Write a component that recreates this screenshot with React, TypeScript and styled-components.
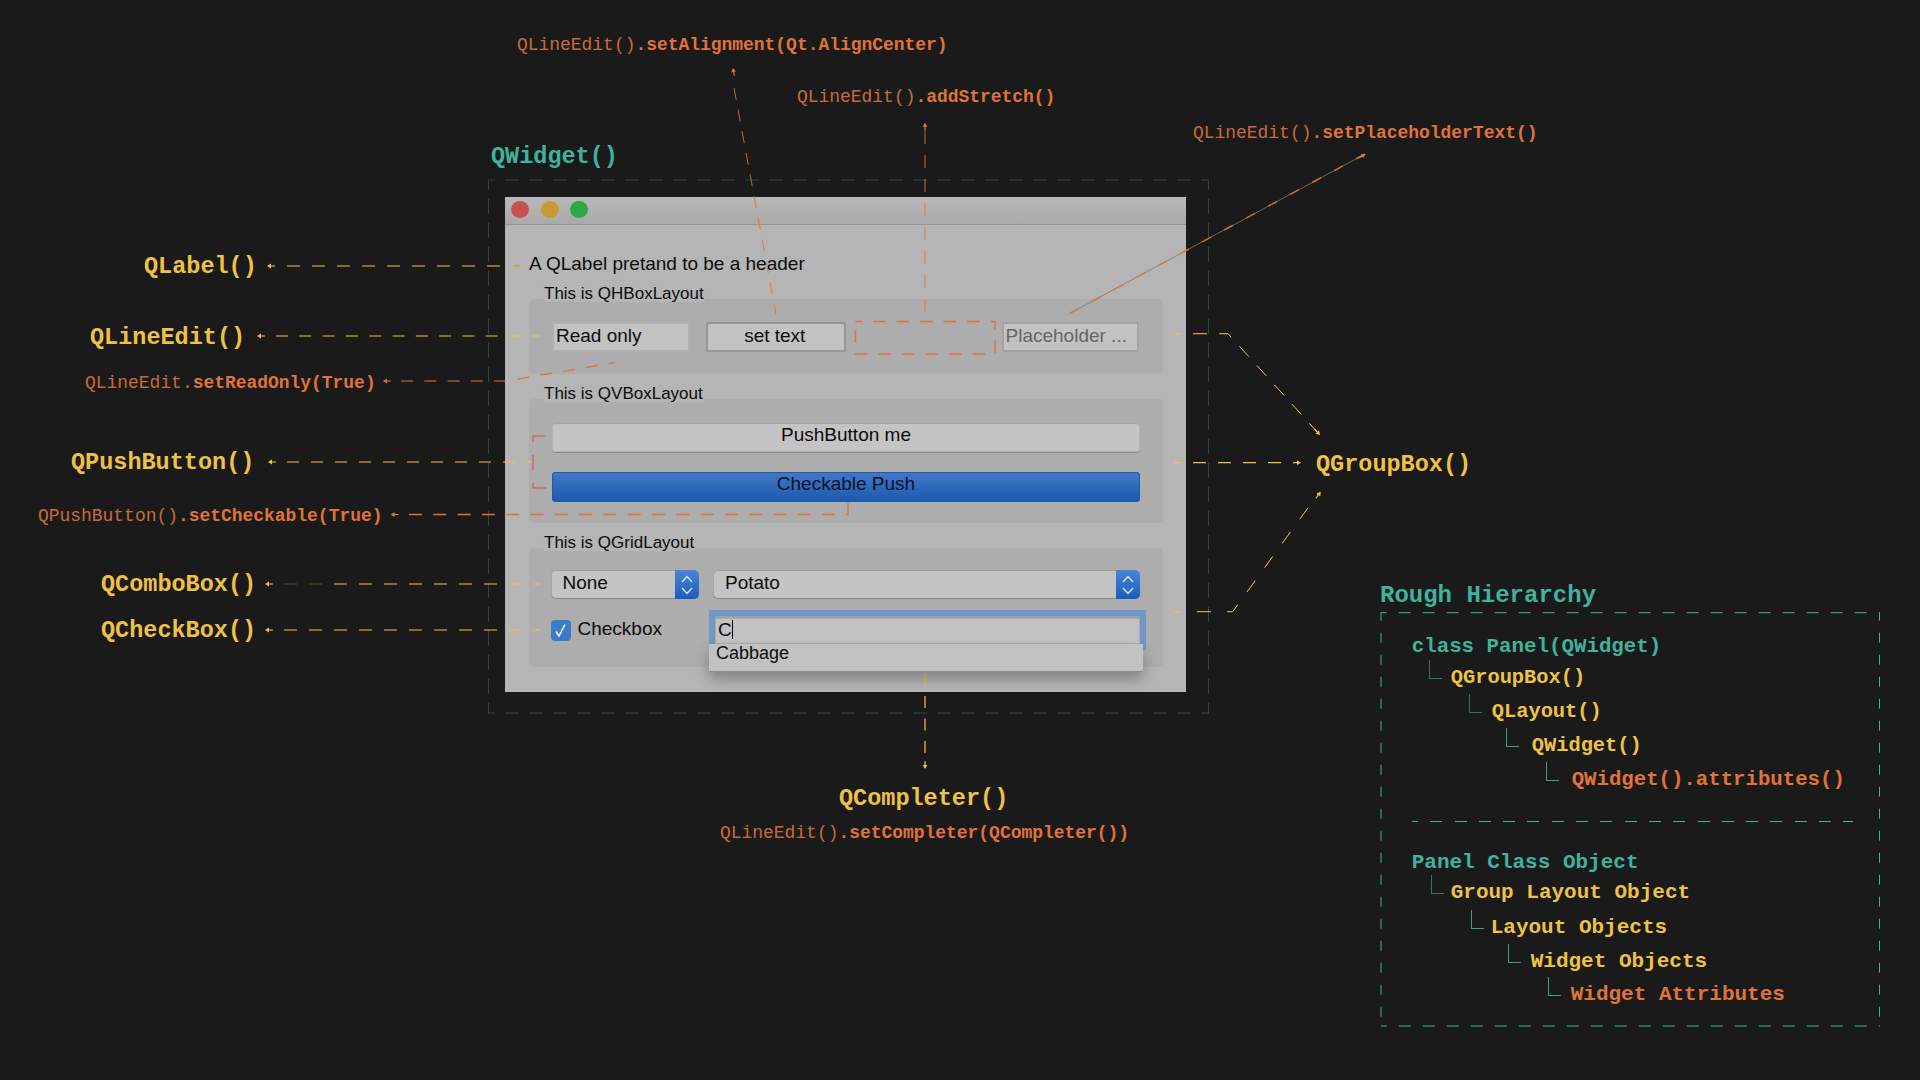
import React from "react";
import styled, { createGlobalStyle } from "styled-components";

const YELLOW = "#efc244";
const ORANGE = "#e0733a";
const TEAL = "#3fb39b";
const UI = `"Liberation Sans", Arial, sans-serif`;
const MONO = `"Liberation Mono", "Courier New", monospace`;

const Global = createGlobalStyle`
  html, body { margin: 0; padding: 0; background: #1a1a1a; }
`;

const Canvas = styled.div`
  position: relative;
  width: 1920px;
  height: 1080px;
  overflow: hidden;
  background: #1a1a1a;
  font-family: ${UI};
`;

/* ---------- the Qt window ---------- */
const Win = styled.div`
  position: absolute;
  left: 505px;
  top: 197px;
  width: 681px;
  height: 495px;
  background: #b5b5b5;
  color: #0c0c0c;
`;
const TitleBar = styled.div`
  display: flex;
  align-items: center;
  gap: 11.5px;
  box-sizing: border-box;
  height: 28px;
  padding: 0 0 2px 6px;
  background: linear-gradient(#b9b9b9, #a9a9a9);
  border-bottom: 1px solid #949494;
`;
const Light = styled.span<{ $c: string }>`
  width: 18px;
  height: 17px;
  border-radius: 50%;
  background: ${(p) => p.$c};
`;
const Body = styled.div`
  display: flex;
  flex-direction: column;
  padding: 28px 23px 0 24px;
`;
const Header = styled.div`
  height: 20px;
  line-height: 22px;
  font-size: 19px;
  margin-bottom: 1px;
`;
const Group = styled.section`
  display: flex;
  flex-direction: column;
  margin-top: 10px;
`;
const GroupTitle = styled.div`
  position: relative;
  z-index: 1;
  align-self: flex-start;
  height: 18px;
  line-height: 20px;
  margin: 0 0 -3px 15px;
  padding-right: 1px;
  background: #b5b5b5;
  font-size: 17px;
`;
const Panel = styled.div<{ $h: number; $top: number }>`
  display: flex;
  box-sizing: border-box;
  height: ${(p) => p.$h}px;
  padding: ${(p) => p.$top}px 23px 0 23px;
  background: #adadad;
  border-radius: 5px;
`;
const HRow = styled(Panel)`
  align-items: flex-start;
`;
const VCol = styled(Panel)`
  flex-direction: column;
  gap: 20px;
`;
const GridPanel = styled(Panel)`
  display: grid;
  grid-template-columns: 148px 1fr;
  grid-auto-rows: min-content;
  column-gap: 14.5px;
  row-gap: 17px;
  padding-left: 21.5px;
`;
const LineEdit = styled.div<{ $w: number; $ml?: number; $center?: boolean; $edge: string; $muted?: boolean }>`
  box-sizing: border-box;
  width: ${(p) => p.$w}px;
  height: 30px;
  margin-left: ${(p) => p.$ml ?? 0}px;
  padding: 0 ${(p) => (p.$center ? 4 : 2)}px 3px 2px;
  line-height: 24px;
  font-size: 19px;
  background: #c2c2c2;
  border: 2px solid ${(p) => p.$edge};
  text-align: ${(p) => (p.$center ? "center" : "left")};
  color: ${(p) => (p.$muted ? "#666666" : "#0c0c0c")};
  white-space: nowrap;
  overflow: hidden;
`;
const Slot = styled.div`
  width: 139px;
  height: 30px;
  margin-left: 10px;
`;
const PushButton = styled.button<{ $on?: boolean }>`
  flex: none;
  height: 29.5px;
  padding: 0 0 6px;
  border: 0;
  border-radius: 4px;
  font: 19px/23px ${UI};
  color: ${(p) => (p.$on ? "#06142c" : "#0c0c0c")};
  background: ${(p) => (p.$on ? "linear-gradient(#4479c6, #1a58ae)" : "#c4c4c4")};
  box-shadow: ${(p) =>
    p.$on ? "inset 0 0 0 1px #1f5cab" : "inset 0 1px 0 #a5a5a5, 0 1px 0 #8a8a8a, inset 0 0 0 1px #b4b4b4"};
`;
const Combo = styled.div`
  display: flex;
  height: 29px;
  border-radius: 5px;
  overflow: hidden;
  background: #c4c4c4;
  box-shadow: inset 0 1px 0 #a0a0a0, inset 0 -1px 0 #8a8a8a, inset 1px 0 0 #a8a8a8;
`;
const ComboText = styled.div`
  flex: 1;
  padding-left: 12px;
  font-size: 19px;
  line-height: 25px;
`;
const ComboArrow = styled.div`
  display: flex;
  align-items: center;
  justify-content: center;
  width: 24px;
  background: linear-gradient(#4a86d8, #1a5cbc);
`;
const CheckCell = styled.div`
  display: flex;
  align-items: flex-start;
  gap: 7px;
  padding-top: 4px;
  font-size: 19px;
  line-height: 17px;
`;
const CheckBox = styled.span`
  display: flex;
  align-items: center;
  justify-content: center;
  flex: none;
  width: 20px;
  height: 21px;
  border-radius: 4px;
  background: #3b7cc9;
`;
const CheckText = styled.span`
  margin-top: 0;
`;
const FocusEdit = styled.div`
  position: relative;
  box-sizing: border-box;
  height: 28px;
  margin-left: 2px;
  padding: 1px 0 0 3px;
  background: #c2c2c2;
  border-top: 2px solid #a2a2a2;
  box-shadow: 0 0 0 6px #7098c6, inset 0 0 0 1px #ababab;
  font-size: 19px;
  line-height: 22px;
  display: flex;
  align-items: flex-start;
`;
const Caret = styled.span`
  width: 1px;
  height: 19px;
  margin: 1px 0 0 0;
  background: #000;
`;
const Popup = styled.div`
  position: absolute;
  z-index: 2;
  left: -6px;
  right: -3px;
  top: 26px;
  height: 27px;
  padding-left: 7px;
  background: #c2c2c2;
  font-size: 18px;
  line-height: 18px;
  box-shadow: 0 1px 0 #8e8e8e, 0 8px 14px rgba(0, 0, 0, 0.28);
`;

/* ---------- free canvas labels ---------- */
const Note = styled.div<{ $x: number; $y: number; $size: number; $c: string; $bold?: boolean }>`
  position: absolute;
  left: ${(p) => p.$x}px;
  top: ${(p) => p.$y - 15}px;
  height: 30px;
  line-height: 30px;
  white-space: pre;
  font-family: ${MONO};
  font-size: ${(p) => p.$size}px;
  font-weight: ${(p) => (p.$bold ? 700 : 400)};
  color: ${(p) => p.$c};
`;
const Faint = styled.span`
  font-weight: 400;
  color: #c96a3a;
`;
const Strong = styled.span`
  font-weight: 700;
  color: ${ORANGE};
`;

/* ---------- hierarchy panel ---------- */
const Tree = styled.div`
  position: absolute;
  left: 1380.7px;
  top: 612.7px;
  box-sizing: border-box;
  width: 499px;
  height: 414px;
  padding: 22px 0 0 31px;
  font-family: ${MONO};
  font-weight: 700;
`;
const TreeRow = styled.div<{ $indent: number; $gap: number; $c: string; $size?: number }>`
  position: relative;
  height: 24px;
  line-height: 24px;
  margin-top: ${(p) => p.$gap}px;
  padding-left: ${(p) => p.$indent}px;
  font-size: ${(p) => p.$size ?? 21}px;
  color: ${(p) => p.$c};
  white-space: pre;
`;
const Elbow = styled.i<{ $left: number; $c: string }>`
  position: absolute;
  left: ${(p) => p.$left}px;
  bottom: 11px;
  width: 12px;
  height: 18px;
  border-left: 1px solid ${(p) => p.$c};
  border-bottom: 1px solid ${(p) => p.$c};
`;
const TreeDivider = styled.div`
  width: 441px;
  height: 1px;
  margin-top: 29px;
  background: repeating-linear-gradient(90deg, ${TEAL} 0 12px, transparent 12px 24.3px);
  background-position: -6px 0;
`;

const Overlay = styled.svg`
  position: absolute;
  left: 0;
  top: 0;
  pointer-events: none;
`;

type Line = { d: string; c: string; dash?: string; off?: number; w?: number; o?: number };
const lines: Line[] = [
  { d: "M287 266H505", c: YELLOW, dash: "13 12" },
  { d: "M513 266H520", c: "#bfa24e", w: 1.6 },
  { d: "M276 336H540", c: YELLOW, dash: "12 11.3" },
  { d: "M287 462H533", c: YELLOW, dash: "12 12" },
  { d: "M284 584H334", c: YELLOW, dash: "13 12", o: 0.3 },
  { d: "M334 584H541", c: YELLOW, dash: "13 12" },
  { d: "M284 630H541", c: YELLOW, dash: "13 12" },
  { d: "M1174 333.7H1228L1320 435", c: YELLOW, dash: "14 12", off: 7, w: 1 },
  { d: "M1174 462.7H1282", c: YELLOW, dash: "13 12", off: 6 },
  { d: "M1174 611.7H1232.7L1318 494", c: YELLOW, dash: "14 16", off: 7, w: 1 },
  { d: "M925 656V755", c: YELLOW, dash: "12 10.5", off: 5 },
  { d: "M401 381H506L614.5 362.7", c: ORANGE, dash: "12 11.3" },
  { d: "M409 514.5H848V497", c: ORANGE, dash: "13 11.3", w: 1.5 },
  { d: "M734 88L776 314", c: ORANGE, dash: "12 10", w: 1, o: 0.85 },
  { d: "M925 131V322", c: ORANGE, dash: "13 11", w: 1, o: 0.85 },
  { d: "M1365 154L1068.5 314", c: "#8a7a50", w: 0.8 },
  { d: "M1365 154L1068.5 314", c: ORANGE, dash: "10 15", w: 1.5, o: 0.85 },
  { d: "M546 436H533V442M533 455V470M533 483V488H546", c: "#d8544e" },
];
const arrows: [number, number, number, number, string][] = [
  [267, 266, -1, 0, YELLOW],
  [257, 336, -1, 0, YELLOW],
  [268, 462, -1, 0, YELLOW],
  [265, 584, -1, 0, YELLOW],
  [265, 630, -1, 0, YELLOW],
  [383, 381, -1, 0, ORANGE],
  [390.7, 514.5, -1, 0, ORANGE],
  [1301, 462.7, 1, 0, YELLOW],
  [1320, 435, 92, 101, YELLOW],
  [1320.7, 491.7, 85, -120, YELLOW],
  [925, 769, 0, 1, YELLOW],
  [733, 68, -1, -6, ORANGE],
  [925, 122.7, 0, -1, ORANGE],
  [1365.5, 154.3, 296, -160, ORANGE],
];

const Connectors = () => (
  <Overlay width={1920} height={1080} viewBox="0 0 1920 1080" fill="none">
    {/* QWidget frame */}
    <path d="M488 180H1209M488 713H1209" stroke="#2c4a42" strokeDasharray="14 10" strokeDashoffset={7} />
    <path d="M488.5 180V713M1208.5 180V713" stroke="#2c4a42" strokeDasharray="15 9" strokeDashoffset={5} />
    {/* hierarchy frame */}
    <path d="M1380.7 612.7H1880M1380.7 1026H1880" stroke={TEAL} strokeDasharray="12 12" strokeDashoffset={6} />
    <path d="M1381 612.7V1026M1879.5 612.7V1026" stroke={TEAL} strokeDasharray="10 12" strokeDashoffset={2} />
    {/* stretch placeholder */}
    <rect x="855.5" y="321.5" width="139.5" height="32.5" stroke={ORANGE} strokeWidth="1.4" strokeDasharray="12.5 11" strokeDashoffset={6} />
    {lines.map((l, i) => (
      <path
        key={i}
        d={l.d}
        stroke={l.c}
        strokeWidth={l.w ?? 1.2}
        strokeDasharray={l.dash}
        strokeDashoffset={l.off}
        opacity={l.o}
      />
    ))}
    {arrows.map(([x, y, dx, dy, c], i) => (
      <path
        key={i}
        transform={`translate(${x} ${y}) rotate(${(Math.atan2(dy, dx) * 180) / Math.PI + 180})`}
        d="M0 0L4 -2.4V-0.6H8V0.6H4V2.4Z"
        fill={c}
      />
    ))}
  </Overlay>
);

const Chevrons = () => (
  <svg width="12" height="22" viewBox="0 0 12 22" fill="none" stroke="#dce6f4" strokeWidth="1.4">
    <path d="M1 8L6 2.5L11 8M1 14L6 19.5L11 14" />
  </svg>
);

type NoteProps = { x: number; y: number; faint: string; strong: string };
const Sub = ({ x, y, faint, strong }: NoteProps) => (
  <Note $x={x} $y={y} $size={17.95} $c={ORANGE}>
    <Faint>{faint}</Faint>
    <Strong>{strong}</Strong>
  </Note>
);

const Big = ({ x, y, children }: { x: number; y: number; children: string }) => (
  <Note $x={x} $y={y + 1.5} $size={23.5} $c={YELLOW} $bold>
    {children}
  </Note>
);

const DIM = "#3a6f62";
const BRIGHT = "#3a9f8b";

export default function App() {
  return (
    <Canvas>
      <Global />
      <Win>
        <TitleBar>
          <Light $c="#c85050" />
          <Light $c="#c79a35" />
          <Light $c="#2ea846" />
        </TitleBar>
        <Body>
          <Header>A QLabel pretand to be a header</Header>
          <Group>
            <GroupTitle>This is QHBoxLayout</GroupTitle>
            <HRow $h={75} $top={23}>
              <LineEdit $w={138} $edge="#b0b0b0">Read only</LineEdit>
              <LineEdit $w={139.5} $ml={16} $center $edge="#969696">set text</LineEdit>
              <Slot />
              <LineEdit $w={137} $ml={7} $edge="#a3a3a3" $muted>Placeholder ...</LineEdit>
            </HRow>
          </Group>
          <Group>
            <GroupTitle>This is QVBoxLayout</GroupTitle>
            <VCol $h={124} $top={23.7}>
              <PushButton>PushButton me</PushButton>
              <PushButton $on>Checkable Push</PushButton>
            </VCol>
          </Group>
          <Group>
            <GroupTitle>This is QGridLayout</GroupTitle>
            <GridPanel $h={119} $top={22}>
              <Combo>
                <ComboText>None</ComboText>
                <ComboArrow><Chevrons /></ComboArrow>
              </Combo>
              <Combo>
                <ComboText>Potato</ComboText>
                <ComboArrow><Chevrons /></ComboArrow>
              </Combo>
              <CheckCell>
                <CheckBox>
                  <svg width="13" height="15" viewBox="0 0 13 15" fill="none" stroke="#f2f6fb" strokeWidth="1.6">
                    <path d="M2 8.5L5 13L11 1.5" />
                  </svg>
                </CheckBox>
                <CheckText>Checkbox</CheckText>
              </CheckCell>
              <FocusEdit>
                C<Caret />
                <Popup>Cabbage</Popup>
              </FocusEdit>
            </GridPanel>
          </Group>
        </Body>
      </Win>

      <Note $x={491} $y={157} $size={23.5} $c={TEAL} $bold>QWidget()</Note>
      <Big x={144} y={265}>QLabel()</Big>
      <Big x={90} y={336}>QLineEdit()</Big>
      <Big x={71} y={461}>QPushButton()</Big>
      <Big x={101} y={583}>QComboBox()</Big>
      <Big x={101} y={629}>QCheckBox()</Big>
      <Big x={1316} y={463}>QGroupBox()</Big>
      <Big x={839} y={797}>QCompleter()</Big>
      <Sub x={85} y={383} faint="QLineEdit." strong="setReadOnly(True)" />
      <Sub x={38} y={516} faint="QPushButton()" strong=".setCheckable(True)" />
      <Sub x={517} y={45} faint="QLineEdit()" strong=".setAlignment(Qt.AlignCenter)" />
      <Sub x={797} y={97} faint="QLineEdit()" strong=".addStretch()" />
      <Sub x={1193} y={133} faint="QLineEdit()" strong=".setPlaceholderText()" />
      <Sub x={720} y={833} faint="QLineEdit()" strong=".setCompleter(QCompleter())" />

      <Note $x={1380} $y={596} $size={24} $c={TEAL} $bold>Rough Hierarchy</Note>
      <Tree>
        <TreeRow $indent={0} $gap={0} $c={TEAL} $size={20.8}>class Panel(QWidget)</TreeRow>
        <TreeRow $indent={39} $gap={7} $c={YELLOW} $size={20.4}>
          <Elbow $left={17} $c={DIM} />QGroupBox()
        </TreeRow>
        <TreeRow $indent={80} $gap={10.7} $c={YELLOW} $size={20.4}>
          <Elbow $left={57} $c={DIM} />QLayout()
        </TreeRow>
        <TreeRow $indent={120} $gap={10} $c={YELLOW} $size={20.4}>
          <Elbow $left={94} $c={BRIGHT} />QWidget()
        </TreeRow>
        <TreeRow $indent={160} $gap={9.3} $c={ORANGE} $size={20.7}>
          <Elbow $left={134} $c={BRIGHT} />QWidget().attributes()
        </TreeRow>
        <TreeDivider />
        <TreeRow $indent={0} $gap={29} $c={TEAL}>Panel Class Object</TreeRow>
        <TreeRow $indent={39} $gap={6.7} $c={YELLOW}>
          <Elbow $left={19} $c={DIM} />Group Layout Object
        </TreeRow>
        <TreeRow $indent={79} $gap={10.3} $c={YELLOW}>
          <Elbow $left={59} $c={BRIGHT} />Layout Objects
        </TreeRow>
        <TreeRow $indent={119} $gap={10} $c={YELLOW}>
          <Elbow $left={96} $c={BRIGHT} />Widget Objects
        </TreeRow>
        <TreeRow $indent={159} $gap={9.7} $c={ORANGE}>
          <Elbow $left={136} $c={BRIGHT} />Widget Attributes
        </TreeRow>
      </Tree>
      <Connectors />
    </Canvas>
  );
}
